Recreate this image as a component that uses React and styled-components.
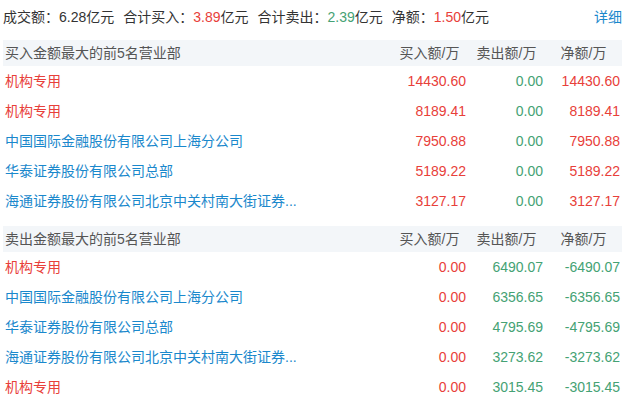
import React from 'react';
import styled, { createGlobalStyle } from 'styled-components';

const GlobalStyle = createGlobalStyle`
    body {
        margin: 0;
        background: #fff;
        font-family: "Liberation Sans", "Noto Sans CJK SC", sans-serif;
        font-size: 14px;
        color: #333;
    }
`;

const colors = {
    red: '#e8403a',
    green: '#45a274',
    blue: '#1a88cc',
    text: '#333',
    muted: '#555',
};

const Wrapper = styled.div`
    width: 619px;
    margin: 0 3px;
`;

const Summary = styled.div`
    display: flex;
    align-items: center;
    height: 32px;
    margin-bottom: 8px;
    white-space: nowrap;
`;

const SummaryItem = styled.span`
    margin-right: 9px;
    color: ${colors.text};
`;

const Value = styled.span`
    color: ${(p) => colors[p.tone] || colors.text};
`;

const DetailLink = styled.a`
    margin-left: auto;
    color: ${colors.blue};
    text-decoration: none;
    cursor: pointer;
`;

const Section = styled.div`
    margin-bottom: 10px;
`;

const HeadRow = styled.div`
    display: flex;
    height: 26px;
    line-height: 26px;
    background: #f3f6f9;
    color: ${colors.muted};
`;

const Row = styled.div`
    display: flex;
    height: 30px;
    line-height: 30px;
`;

const NameCell = styled.div`
    flex: 1;
    padding: 0 2px;
    overflow: hidden;
    white-space: nowrap;
    color: ${(p) => (p.inst ? colors.red : colors.blue)};
`;

const HeadName = styled.div`
    flex: 1;
    padding: 0 2px;
`;

const HeadCell = styled.div`
    width: 77px;
    text-align: center;
    white-space: nowrap;
`;

const NumCell = styled.div`
    width: 77px;
    padding-right: 2px;
    box-sizing: border-box;
    text-align: right;
    color: ${(p) => colors[p.tone]};
`;

const buyRows = [
    ['机构专用', '14430.60', '0.00', '14430.60'],
    ['机构专用', '8189.41', '0.00', '8189.41'],
    ['中国国际金融股份有限公司上海分公司', '7950.88', '0.00', '7950.88'],
    ['华泰证券股份有限公司总部', '5189.22', '0.00', '5189.22'],
    ['海通证券股份有限公司北京中关村南大街证券...', '3127.17', '0.00', '3127.17'],
];

const sellRows = [
    ['机构专用', '0.00', '6490.07', '-6490.07'],
    ['中国国际金融股份有限公司上海分公司', '0.00', '6356.65', '-6356.65'],
    ['华泰证券股份有限公司总部', '0.00', '4795.69', '-4795.69'],
    ['海通证券股份有限公司北京中关村南大街证券...', '0.00', '3273.62', '-3273.62'],
    ['机构专用', '0.00', '3015.45', '-3015.45'],
];

const netTone = (v) => (v.startsWith('-') ? 'green' : 'red');

const Table = ({ title, rows }) => (
    <Section>
        <HeadRow>
            <HeadName>{title}</HeadName>
            <HeadCell>买入额/万</HeadCell>
            <HeadCell>卖出额/万</HeadCell>
            <HeadCell>净额/万</HeadCell>
        </HeadRow>
        {rows.map(([name, buy, sell, net], i) => (
            <Row key={i}>
                <NameCell inst={name === '机构专用'}>{name}</NameCell>
                <NumCell tone="red">{buy}</NumCell>
                <NumCell tone="green">{sell}</NumCell>
                <NumCell tone={netTone(net)}>{net}</NumCell>
            </Row>
        ))}
    </Section>
);

const App = () => {
    return (
        <Wrapper>
            <GlobalStyle />
            <Summary>
                <SummaryItem>成交额：<Value>6.28</Value>亿元</SummaryItem>
                <SummaryItem>合计买入：<Value tone="red">3.89</Value>亿元</SummaryItem>
                <SummaryItem>合计卖出：<Value tone="green">2.39</Value>亿元</SummaryItem>
                <SummaryItem>净额：<Value tone="red">1.50</Value>亿元</SummaryItem>
                <DetailLink>详细</DetailLink>
            </Summary>
            <Table title="买入金额最大的前5名营业部" rows={buyRows} />
            <Table title="卖出金额最大的前5名营业部" rows={sellRows} />
        </Wrapper>
    );
};

export default App;
